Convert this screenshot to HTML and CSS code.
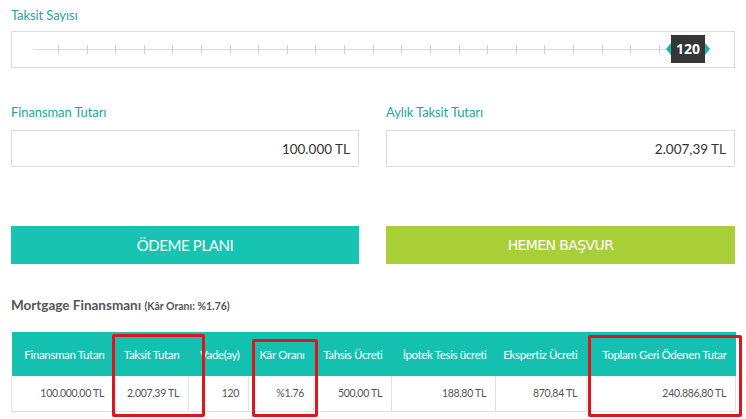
FILE: index.html
```html
<!DOCTYPE html>
<html lang="tr">
<head>
<meta charset="utf-8">
<title>Mortgage Hesaplama</title>
<link rel="stylesheet" href="styles.css">
</head>
<body>
<div class="page">
  <div class="field-label first">Taksit Sayısı</div>
  <div class="slider">
    <div class="track">
      <div class="ticks">
        <span></span><span></span><span></span><span></span><span></span><span></span>
        <span></span><span></span><span></span><span></span><span></span><span></span>
        <span></span><span></span><span></span><span></span><span></span><span></span>
        <span></span><span></span><span></span><span></span>
      </div>
    </div>
    <div class="handle">120</div>
  </div>

  <div class="two-col inputs">
    <div class="field">
      <div class="field-label">Finansman Tutarı</div>
      <div class="input">100.000 TL</div>
    </div>
    <div class="field">
      <div class="field-label">Aylık Taksit Tutarı</div>
      <div class="input">2.007,39 TL</div>
    </div>
  </div>

  <div class="two-col buttons">
    <div class="btn btn-teal">ÖDEME PLANI</div>
    <div class="btn btn-green">HEMEN BAŞVUR</div>
  </div>

  <h2 class="section-title">Mortgage Finansmanı <small>(Kâr Oranı: %1.76)</small></h2>

  <div class="table-wrap">
    <table class="plan">
      <colgroup>
        <col class="c1"><col class="c2"><col class="c3"><col class="c4">
        <col class="c5"><col class="c6"><col class="c7"><col class="c8">
      </colgroup>
      <thead>
        <tr>
          <th>Finansman Tutarı</th>
          <th>Taksit Tutarı</th>
          <th>Vade(ay)</th>
          <th>Kâr Oranı</th>
          <th>Tahsis Ücreti</th>
          <th>İpotek Tesis ücreti</th>
          <th>Ekspertiz Ücreti</th>
          <th>Toplam Geri Ödenen Tutar</th>
        </tr>
      </thead>
      <tbody>
        <tr>
          <td>100.000,00 TL</td>
          <td>2.007,39 TL</td>
          <td>120</td>
          <td>%1.76</td>
          <td>500,00 TL</td>
          <td>188,80 TL</td>
          <td>870,84 TL</td>
          <td>240.886,80 TL</td>
        </tr>
      </tbody>
    </table>
    <div class="mark mark-1"></div>
    <div class="mark mark-2"></div>
    <div class="mark mark-3"></div>
  </div>
</div>
</body>
</html>
```

FILE: styles.css
```css
* { box-sizing: border-box; }

html, body {
  margin: 0;
  padding: 0;
  background: #ffffff;
}

body {
  font-family: "Lato", "Open Sans", "DejaVu Sans", sans-serif;
  color: #444;
  width: 746px;
  height: 419px;
  overflow: hidden;
}

.page {
  padding: 0 11px;
  width: 746px;
}

.field-label {
  color: #22a898;
  font-size: 13px;
  line-height: 16px;
  letter-spacing: -0.1px;
  height: 16px;
  margin-bottom: 10px;
}

.field-label.first {
  padding-top: 7px;
  height: 31px;
  margin-bottom: 0;
}

/* slider */
.slider {
  position: relative;
  width: 724px;
  height: 37px;
  border: 1px solid #dcdcdc;
  background: #fff;
}

.track {
  position: absolute;
  left: 21px;
  top: 17px;
  width: 660px;
  height: 1px;
  background: #d9d9d9;
}

.ticks {
  position: absolute;
  left: 25px;
  top: -4px;
  width: 602px;
  display: flex;
  justify-content: space-between;
}

.ticks span {
  display: block;
  width: 1px;
  height: 9px;
  background: #cfcfcf;
}

.handle {
  position: absolute;
  left: 659px;
  top: 3px;
  width: 34px;
  height: 28px;
  background: #363636;
  color: #fff;
  font-family: "Open Sans", sans-serif;
  font-weight: 700;
  font-size: 14px;
  line-height: 28px;
  text-align: center;
}

.handle::before,
.handle::after {
  content: "";
  position: absolute;
  top: 8px;
  width: 0;
  height: 0;
  border-top: 6px solid transparent;
  border-bottom: 6px solid transparent;
}

.handle::before {
  left: -5px;
  border-right: 5px solid #19b7a6;
}

.handle::after {
  right: -5px;
  border-left: 5px solid #19b7a6;
}

/* two columns */
.two-col {
  display: grid;
  grid-template-columns: 348px 349px;
  column-gap: 27px;
}

.inputs {
  margin-top: 36px;
}

.input {
  height: 37px;
  border: 1px solid #dcdcdc;
  text-align: right;
  padding-right: 8px;
  font-size: 13.5px;
  line-height: 36px;
  color: #333;
}

.buttons {
  margin-top: 59px;
}

.btn {
  height: 38px;
  line-height: 38px;
  text-align: center;
  color: #fff;
  font-size: 15px;
  letter-spacing: -0.4px;
}

.btn-teal { background: #17c3b1; }
.btn-green {
  background: #a9cf38;
  font-family: "DejaVu Sans", sans-serif;
  font-size: 14px;
  letter-spacing: -0.6px;
}

.section-title {
  margin: 33px 0 0;
  font-size: 13.5px;
  line-height: 16px;
  font-weight: 700;
  color: #555;
}

.section-title small {
  font-size: 10.5px;
}

/* table */
.table-wrap {
  position: relative;
  margin-top: 18px;
  width: 724px;
}

.plan {
  width: 724px;
  border-collapse: collapse;
  table-layout: fixed;
}

.c1 { width: 102px; }
.c2 { width: 75px; }
.c3 { width: 60px; }
.c4 { width: 65px; }
.c5 { width: 78px; }
.c6 { width: 104px; }
.c7 { width: 91px; }
.c8 { width: 149px; }

.plan th {
  background: #14c1b0;
  color: #fff;
  font-weight: 400;
  font-size: 11.5px;
  letter-spacing: -0.35px;
  height: 44px;
  text-align: right;
  padding: 0 9px 0 0;
  white-space: nowrap;
}

.plan td {
  height: 35px;
  border: 1px solid #e3e3e3;
  border-top: none;
  font-size: 10.5px;
  letter-spacing: -0.3px;
  color: #555;
  text-align: right;
  padding: 0 9px 0 0;
  white-space: nowrap;
}

.mark {
  position: absolute;
  border: 3px solid #e0141b;
  border-radius: 2px;
}

.mark-1 { left: 101px; top: 2px; width: 93px; height: 83px; }
.mark-2 { left: 241px; top: 7px; width: 66px; height: 78px; }
.mark-3 { left: 577px; top: 3px; width: 154px; height: 82px; }
```
